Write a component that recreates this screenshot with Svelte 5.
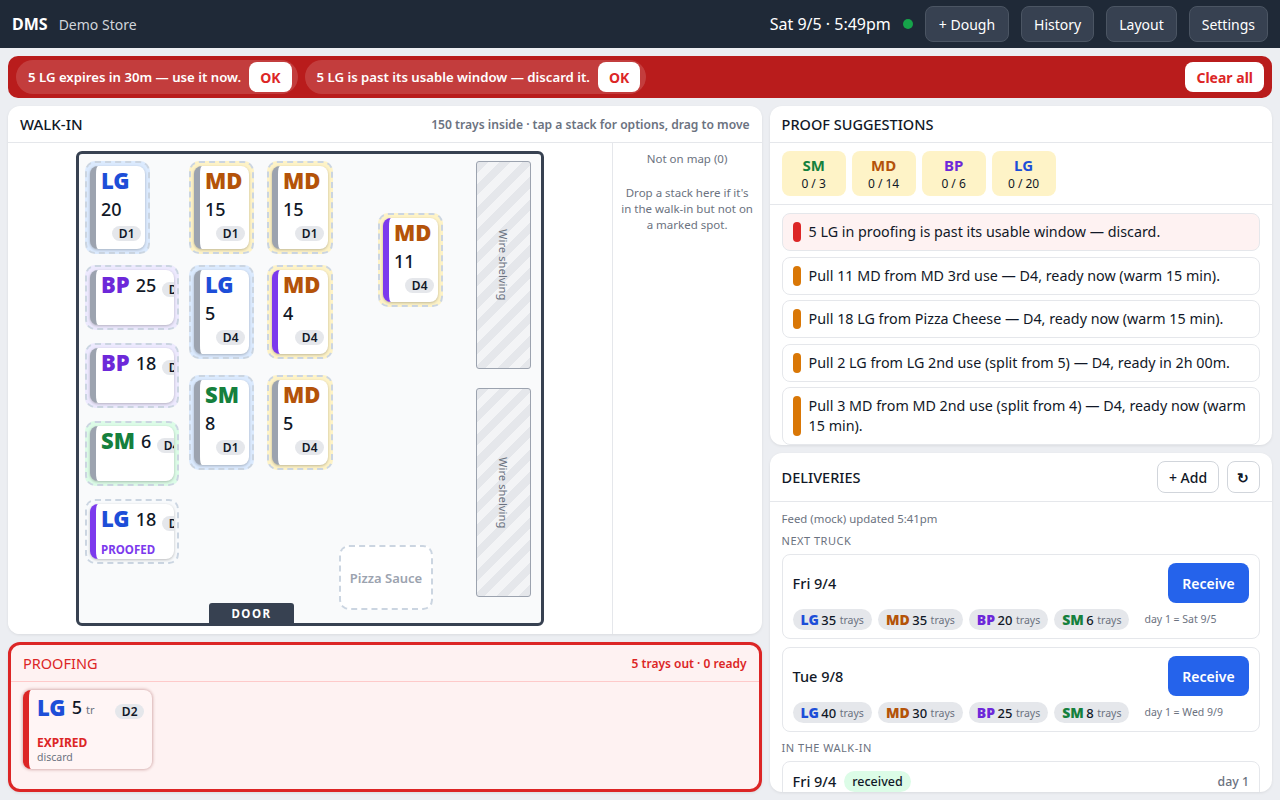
<script>
  const T = {
    LG: { c: '#1d4ed8', z: '#dbeafe' },
    MD: { c: '#b45309', z: '#fef3c7' },
    BP: { c: '#6d28d9', z: '#ede9fe' },
    SM: { c: '#15803d', z: '#dcfce7' }
  };
  const stacks = [
    { t: 'LG', n: 20, d: 'D1', x: 85, y: 161, w: 65, h: 93 },
    { t: 'MD', n: 15, d: 'D1', x: 189, y: 161, w: 65, h: 93 },
    { t: 'MD', n: 15, d: 'D1', x: 267, y: 161, w: 66, h: 93 },
    { t: 'MD', n: 11, d: 'D4', x: 378, y: 213, w: 65, h: 94, p: 1 },
    { t: 'BP', n: 25, d: 'D1', x: 85, y: 265, w: 94, h: 65, wide: 1 },
    { t: 'LG', n: 5, d: 'D4', x: 189, y: 265, w: 65, h: 94 },
    { t: 'MD', n: 4, d: 'D4', x: 267, y: 265, w: 66, h: 94, p: 1 },
    { t: 'BP', n: 18, d: 'D1', x: 85, y: 343, w: 94, h: 65, wide: 1 },
    { t: 'SM', n: 8, d: 'D1', x: 189, y: 375, w: 65, h: 95, z: '#dbeafe' },
    { t: 'MD', n: 5, d: 'D4', x: 267, y: 375, w: 66, h: 95 },
    { t: 'SM', n: 6, d: 'D4', x: 85, y: 421, w: 94, h: 65, wide: 1 },
    { t: 'LG', n: 18, d: 'D4', x: 85, y: 499, w: 94, h: 65, wide: 1, p: 1, proofed: 1 }
  ];
  const needs = [['SM', '0 / 3'], ['MD', '0 / 14'], ['BP', '0 / 6'], ['LG', '0 / 20']];
  const tips = [
    { s: 'red', m: '5 LG in proofing is past its usable window — discard.' },
    { s: 'amber', m: 'Pull 11 MD from MD 3rd use — D4, ready now (warm 15 min).' },
    { s: 'amber', m: 'Pull 18 LG from Pizza Cheese — D4, ready now (warm 15 min).' },
    { s: 'amber', m: 'Pull 2 LG from LG 2nd use (split from 5) — D4, ready in 2h 00m.' },
    { s: 'amber', m: 'Pull 3 MD from MD 2nd use (split from 4) — D4, ready now (warm 15 min).' }
  ];
  const trucks = [
    { date: 'Fri 9/4', day: 'day 1 = Sat 9/5', items: [['LG', 35], ['MD', 35], ['BP', 20], ['SM', 6]] },
    { date: 'Tue 9/8', day: 'day 1 = Wed 9/9', items: [['LG', 40], ['MD', 30], ['BP', 25], ['SM', 8]] }
  ];
</script>

<div class="app">
  <header class="top">
    <span class="brand">DMS</span>
    <span class="store">Demo Store</span>
    <span class="clock">Sat 9/5 · 5:49pm</span>
    <span class="dot"></span>
    <button class="nav dough">+ Dough</button>
    <button class="nav">History</button>
    <button class="nav">Layout</button>
    <button class="nav">Settings</button>
  </header>

  <div class="alerts">
    <div class="alert"><span>5 LG expires in 30m — use it now.</span><button class="ok">OK</button></div>
    <div class="alert"><span>5 LG is past its usable window — discard it.</span><button class="ok">OK</button></div>
    <button class="ok clear">Clear all</button>
  </div>

  <main class="grid">
    <div class="col left">
      <section class="panel walk">
        <div class="head">
          <h2 class="big">WALK-IN</h2>
          <span class="hint">150 trays inside · tap a stack for options, drag to move</span>
        </div>
        <div class="walk-body">
          <div class="canvas">
            <div class="room"></div>
            {#each stacks as s}
              <div class="zone" style="left:{s.x - 8}px;top:{s.y - 143}px;width:{s.w}px;height:{s.h}px;background:{s.proofed ? '#f8fafc' : (s.z || T[s.t].z)}">
                <div class="card" class:wide={s.wide} class:purple={s.p}>
                  <b class="code" style="color:{T[s.t].c}">{s.t}</b>
                  <span class="count">{s.n}</span>
                  <span class="tag">{s.d}</span>
                  {#if s.proofed}<span class="proofed">PROOFED</span>{/if}
                </div>
              </div>
            {/each}
            <div class="shelf one"><span>Wire shelving</span></div>
            <div class="shelf two"><span>Wire shelving</span></div>
            <div class="spot">Pizza Sauce</div>
            <div class="door">DOOR</div>
          </div>
          <aside class="offmap">
            <p>Not on map (0)</p>
            <p>Drop a stack here if it's in the walk-in but not on a marked spot.</p>
          </aside>
        </div>
      </section>

      <section class="panel proofing">
        <div class="head red">
          <h2>PROOFING</h2>
          <span class="out">5 trays out · 0 ready</span>
        </div>
        <div class="pbody">
          <div class="pcard">
            <div class="prow">
              <b class="code" style="color:{T.LG.c}">LG</b>
              <span class="count">5</span>
              <span class="tr">tr</span>
              <span class="tag">D2</span>
            </div>
            <div class="exp">EXPIRED</div>
            <div class="disc">discard</div>
          </div>
        </div>
      </section>
    </div>

    <div class="col right">
      <section class="panel sugg">
        <div class="head"><h2>PROOF SUGGESTIONS</h2></div>
        <div class="needs">
          {#each needs as [k, v]}
            <div class="need"><b style="color:{T[k].c}">{k}</b><span>{v}</span></div>
          {/each}
        </div>
        <div class="tips">
          {#each tips as t}
            <div class="tip" class:bad={t.s === 'red'}>
              <i class="bar {t.s}"></i><span>{t.m}</span>
            </div>
          {/each}
        </div>
      </section>

      <section class="panel deliv">
        <div class="head tall">
          <h2>DELIVERIES</h2>
          <div class="acts">
            <button class="ghost add">+ Add</button>
            <button class="ghost sq">↻</button>
          </div>
        </div>
        <div class="dbody">
          <div class="feed">Feed (mock) updated 5:41pm</div>
          <div class="lbl">NEXT TRUCK</div>
          {#each trucks as tr}
            <div class="truck">
              <div class="tr-top">
                <span class="date">{tr.date}</span>
                <button class="receive">Receive</button>
              </div>
              <div class="tr-chips">
                {#each tr.items as [k, n]}
                  <span class="chip"><b style="color:{T[k].c}">{k}</b> {n} <small>trays</small></span>
                {/each}
                <span class="dayone">{tr.day}</span>
              </div>
            </div>
          {/each}
          <div class="lbl second">IN THE WALK-IN</div>
          <div class="truck in">
            <div class="in-row">
              <span class="date">Fri 9/4</span>
              <span class="got">received</span>
              <span class="daynum">day 1</span>
            </div>
          </div>
        </div>
      </section>
    </div>
  </main>
</div>

<style>
  :global(body) { margin: 0; background: #eceef2; }
  * { box-sizing: border-box; }
  .app {
    width: 1280px; height: 800px; overflow: hidden;
    display: flex; flex-direction: column;
    font-family: "Noto Sans", sans-serif; color: #111827; background: #eceef2;
  }
  button { font-family: inherit; cursor: pointer; }
  h2 { margin: 0; font-size: 14.5px; font-weight: 500; color: #111827; }
  h2.big { font-size: 15px; }

  .top {
    height: 48px; flex: none; background: #1f2937; color: #fff;
    display: flex; align-items: center; padding: 0 12px;
  }
  .brand { font-size: 16px; font-weight: 700; }
  .store { font-size: 14px; color: #d1d5db; margin-left: 11px; }
  .clock { margin-left: auto; font-size: 16px; }
  .dot { width: 10px; height: 10px; border-radius: 50%; background: #16a34a; margin: 0 12px; }
  .nav {
    height: 36px; padding: 0 12px; margin-left: 12px; font-size: 14px; color: #fff;
    background: #374151; border: 1px solid #4b5563; border-radius: 8px;
  }
  .nav.dough { padding: 0 13px; margin-left: 0; }

  .alerts {
    margin: 8px 8px 0; height: 42px; flex: none; background: #b91c1c; border-radius: 10px;
    display: flex; align-items: center; gap: 7px; padding: 0 8px;
  }
  .alert {
    height: 34px; border-radius: 17px; background: rgba(255,255,255,.15); color: #fff;
    display: flex; align-items: center; gap: 8px; padding: 0 6px 0 12px;
    font-size: 13.2px; font-weight: 600;
  }
  .ok {
    height: 30px; padding: 0 11px; border: 0; border-radius: 8px; background: #fff;
    color: #dc2626; font-size: 14px; font-weight: 700;
  }
  .clear { margin-left: auto; }

  .grid {
    flex: 1; min-height: 0; padding: 8px; display: grid;
    grid-template-columns: 3fr 2fr; gap: 8px;
  }
  .col { display: flex; flex-direction: column; gap: 8px; min-height: 0; min-width: 0; }
  .panel { background: #fff; border-radius: 12px; box-shadow: 0 1px 3px rgba(0,0,0,.08); overflow: hidden; }
  .head {
    height: 37px; padding: 0 12px; display: flex; align-items: center; justify-content: space-between;
    border-bottom: 1px solid #e5e7eb;
  }
  .hint { font-size: 12.1px; font-weight: 600; color: #6b7280; }

  .walk { height: 528px; flex: none; }
  .walk-body { display: flex; height: 491px; }
  .canvas { position: relative; flex: 1; background: #fff; }
  .room {
    position: absolute; left: 68px; top: 8px; width: 468px; height: 475px;
    background: #f9fafb; border: 3px solid #374151; border-radius: 6px;
  }
  .offmap {
    width: 150px; flex: none; border-left: 1px solid #e5e7eb; padding: 8px 7px;
    font-size: 11.5px; line-height: 16px; color: #6b7280; text-align: center;
  }
  .offmap p { margin: 0 0 18px; }

  .zone {
    position: absolute; border: 2px dashed #cbd5e1; border-radius: 10px; padding: 3px;
  }
  .card {
    width: 100%; height: 100%; background: #fff; border-left: 6px solid #9ca3af; border-radius: 8px;
    box-shadow: 0 1px 3px rgba(0,0,0,.25); padding: 1px 6px 3px 5px; overflow: hidden;
    display: flex; flex-direction: column; align-items: flex-start; position: relative;
  }
  .card.purple { border-left-color: #7c3aed; }
  .code { font-size: 22px; line-height: 26px; font-weight: 900; }
  .count { font-size: 18px; line-height: 22px; color: #111827; font-weight: 500; }
  .card .count { margin-top: 5px; }
  .tag {
    font-size: 12px; line-height: 15px; font-weight: 600; padding: 0 6.5px; border-radius: 8px;
    background: #e5e7eb; color: #111827; flex: none;
  }
  .card .tag { margin-top: 6px; margin-left: auto; margin-right: -2px; }
  .card.wide { flex-direction: row; flex-wrap: nowrap; align-items: flex-start; gap: 6px; }
  .card.wide .count { margin-top: 3px; }
  .card.wide .tag { margin: 11px 0 0; }
  .proofed {
    position: absolute; left: 5px; bottom: 2px; font-size: 11.5px; line-height: 14px; font-weight: 700; color: #7c3aed;
  }

  .shelf {
    position: absolute; width: 55px; left: 468px; border: 1px solid #9ca3af; border-radius: 3px;
    background: repeating-linear-gradient(135deg, #e5e7eb 0 8px, #f3f4f6 8px 16px);
    display: flex; align-items: center; justify-content: center;
    font-size: 11.3px; color: #6b7280;
  }
  .shelf span { writing-mode: vertical-rl; }
  .shelf.one { top: 18px; height: 208px; }
  .shelf.two { top: 245px; height: 209px; }
  .spot {
    position: absolute; left: 331px; top: 402px; width: 94px; height: 65px;
    border: 2px dashed #cbd5e1; border-radius: 10px; background: #fff;
    display: flex; align-items: center; justify-content: center;
    font-size: 13px; font-weight: 600; color: #9ca3af;
  }
  .door {
    position: absolute; left: 201px; top: 460px; width: 85px; height: 20px;
    background: #374151; color: #fff; font-size: 11.5px; font-weight: 700; letter-spacing: 1.5px;
    display: flex; align-items: center; justify-content: center; border-radius: 3px 3px 0 0;
  }

  .proofing { flex: 1; min-height: 0; background: #fef2f2; border: 3px solid #dc2626; }
  .head.red { height: 37px; border-bottom-color: #fecaca; padding: 0 12px; }
  .head.red h2 { color: #dc2626; font-weight: 400; }
  .out { font-size: 12px; font-weight: 600; color: #dc2626; }
  .pbody { padding: 8px 12px; }
  .pcard {
    width: 129px; height: 79px; background: #fff5f5; border-left: 6px solid #dc2626; border-radius: 8px;
    box-shadow: 0 0 3px 1px rgba(127,29,29,.3); padding: 1px 8px;
  }
  .prow { display: flex; align-items: center; height: 32px; gap: 6px; }
  .prow .tr { font-size: 11px; color: #6b7280; margin-top: 4px; margin-left: -2px; }
  .prow .tag { margin-left: auto; margin-top: 9px; }
  .exp { font-size: 12px; line-height: 14px; font-weight: 700; color: #dc2626; margin-top: 13px; }
  .disc { font-size: 10.5px; line-height: 14px; color: #6b7280; }

  .sugg { height: 339px; flex: none; }
  .needs { display: flex; gap: 6px; padding: 8px 12px; height: 62px; border-bottom: 1px solid #e5e7eb; }
  .need {
    width: 64px; height: 45px; background: #fef3c7; border-radius: 8px;
    display: flex; flex-direction: column; align-items: center; justify-content: center;
  }
  .need b { font-size: 15px; line-height: 20px; font-weight: 700; }
  .need span { font-size: 12px; line-height: 16px; margin-top: 1px; }
  .tips { padding: 8px 12px; display: flex; flex-direction: column; gap: 5.5px; }
  .tip {
    min-height: 38px; padding: 8px 10px; border: 1px solid #e5e7eb; border-radius: 8px; display: flex;
    align-items: stretch; gap: 8px; font-size: 14.3px; line-height: 20px; background: #fff;
  }
  .tip.bad { background: #fef2f2; }
  .bar { width: 8px; border-radius: 4px; flex: none; }
  .bar.red { background: #dc2626; }
  .bar.amber { background: #d97706; }

  .deliv { flex: 1; min-height: 0; }
  .head.tall { height: 49px; }
  .acts { display: flex; gap: 8px; }
  .ghost {
    height: 32px; padding: 0; background: #fff; border: 1px solid #d1d5db; border-radius: 8px;
    font-size: 14px; font-weight: 500; color: #111827;
  }
  .ghost.add { width: 62px; }
  .ghost.sq { width: 33px; font-weight: 700; }
  .dbody { padding: 9px 12px; }
  .feed { font-size: 11.4px; line-height: 15px; color: #6b7280; }
  .lbl { font-size: 11px; line-height: 15px; color: #6b7280; letter-spacing: .5px; margin: 7px 0 6px; }
  .lbl.second { margin: 8px 0 6px; }
  .truck { border: 1px solid #e5e7eb; border-radius: 8px; padding: 8px 10px; margin-bottom: 8px; height: 85px; }
  .tr-top { display: flex; align-items: center; justify-content: space-between; height: 40px; }
  .date { font-size: 14.5px; font-weight: 500; }
  .receive {
    width: 81px; height: 40px; border: 0; border-radius: 8px; background: #2563eb; color: #fff;
    font-size: 14px; font-weight: 600;
  }
  .tr-chips { display: flex; align-items: center; gap: 6px; margin-top: 6px; }
  .chip {
    height: 21px; padding: 0 8px; border-radius: 11px; background: #e5e7eb; font-size: 13px; font-weight: 500;
    display: inline-flex; align-items: center; gap: 2.5px; white-space: nowrap;
  }
  .chip b { font-size: 14px; font-weight: 900; }
  .chip small { font-size: 10.5px; font-weight: 400; color: #6b7280; margin-left: 1px; }
  .dayone { font-size: 10.5px; color: #6b7280; margin-left: 9px; margin-top: -2px; }
  .truck.in { height: 60px; }
  .in-row { display: flex; align-items: center; gap: 8px; height: 22px; }
  .got { background: #dcfce7; border-radius: 11px; height: 21px; line-height: 21px; padding: 0 8px; font-size: 12.5px; font-weight: 500; }
  .daynum { margin-left: auto; font-size: 12.3px; font-weight: 500; color: #6b7280; }
</style>
